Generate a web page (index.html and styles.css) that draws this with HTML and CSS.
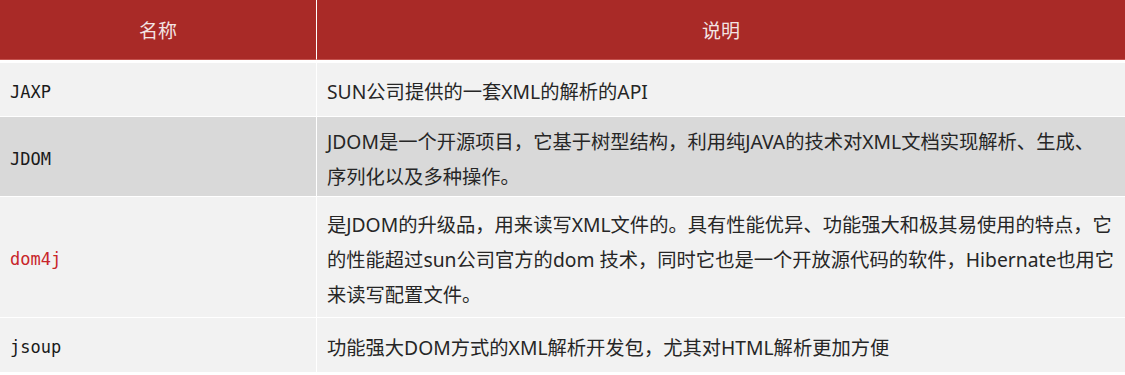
FILE: index.html
```html
<!DOCTYPE html>
<html lang="zh-CN">
<head>
<meta charset="utf-8">
<title>XML 解析</title>
<link rel="stylesheet" href="styles.css">
</head>
<body>
<table class="parsers">
  <thead>
    <tr class="head-row">
      <th class="col-name">名称</th>
      <th class="col-desc">说明</th>
    </tr>
  </thead>
  <tbody>
    <tr class="row row-a first">
      <td class="name">JAXP</td>
      <td class="desc">SUN公司提供的一套XML的解析的API</td>
    </tr>
    <tr class="row row-b">
      <td class="name">JDOM</td>
      <td class="desc">JDOM是一个开源项目，它基于树型结构，利用纯JAVA的技术对XML文档实现解析、生成、<br>序列化以及多种操作。</td>
    </tr>
    <tr class="row row-a tall">
      <td class="name hot">dom4j</td>
      <td class="desc">是JDOM的升级品，用来读写XML文件的。具有性能优异、功能强大和极其易使用的特点，它<br>的性能超过sun公司官方的dom 技术，同时它也是一个开放源代码的软件，Hibernate也用它<br>来读写配置文件。</td>
    </tr>
    <tr class="row row-a last">
      <td class="name">jsoup</td>
      <td class="desc">功能强大DOM方式的XML解析开发包，尤其对HTML解析更加方便</td>
    </tr>
  </tbody>
</table>
</body>
</html>
```

FILE: styles.css
```css
html, body {
  margin: 0;
  padding: 0;
  background: #ffffff;
}

.parsers {
  width: 1125px;
  border-collapse: separate;
  border-spacing: 0;
  table-layout: fixed;
}

.col-name {
  width: 316px;
}

.head-row th {
  height: 59px;
  padding: 0;
  background: #a92a27;
  color: #f3e4e3;
  font-family: "Noto Sans CJK SC", sans-serif;
  font-weight: 400;
  font-size: 19px;
  text-align: center;
  vertical-align: middle;
  border-bottom: 1px solid #c4524e;
}

.head-row th.col-name {
  border-right: 1px solid #ffffff;
}

.row td {
  padding: 4px 10px 0 10px;
  vertical-align: middle;
  border-top: 1px solid #ffffff;
}

.row td.name {
  border-right: 1px solid #ffffff;
  font-family: "DejaVu Sans Mono", "Liberation Mono", monospace;
  font-size: 17px;
  color: #1a1a1a;
}

.row td.name.hot {
  color: #c8252a;
}

.row td.desc {
  font-family: "Noto Sans", "Noto Sans CJK SC", sans-serif;
  font-size: 19.3px;
  line-height: 35px;
  color: #262626;
  white-space: nowrap;
}

.row-a td { background: #f2f2f2; }
.row-b td { background: #d9d9d9; }

.row { height: 54px; }
.row.first td { border-top-width: 3px; }
.row.first { height: 56px; }
.row-b { height: 80px; }
.row.tall { height: 121px; }
.row.last { height: 55px; }
```
